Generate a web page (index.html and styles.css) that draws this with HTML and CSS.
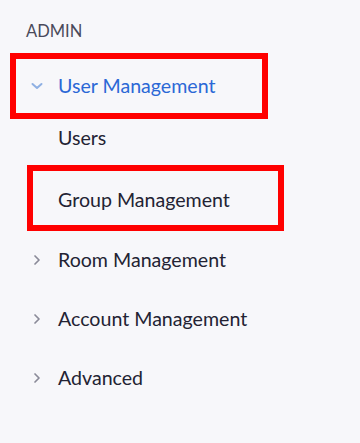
FILE: index.html
```html
<!DOCTYPE html>
<html lang="en">
<head>
    <meta charset="UTF-8">
    <meta name="viewport" content="width=device-width, initial-scale=1.0">
    <title>Admin Menu</title>
    <link rel="stylesheet" href="styles.css">
</head>
<body>

<nav class="sidebar">
    <div class="section-title">ADMIN</div>

    <div class="menu-item open">
        <svg class="chevron" viewBox="0 0 14 14" width="14" height="14"><path d="M2.5 5l4.5 4 4.5-4" fill="none" stroke="currentColor" stroke-width="2" stroke-linecap="round" stroke-linejoin="round"/></svg>
        <span>User Management</span>
        <div class="highlight highlight-main"></div>
    </div>
    <div class="sub-item first">Users</div>
    <div class="sub-item">
        <span>Group Management</span>
        <div class="highlight highlight-sub"></div>
    </div>

    <div class="menu-item">
        <svg class="chevron" viewBox="0 0 14 14" width="14" height="14"><path d="M5 3l4 4-4 4" fill="none" stroke="currentColor" stroke-width="1.7" stroke-linecap="round" stroke-linejoin="round"/></svg>
        <span>Room Management</span>
    </div>
    <div class="menu-item">
        <svg class="chevron" viewBox="0 0 14 14" width="14" height="14"><path d="M5 3l4 4-4 4" fill="none" stroke="currentColor" stroke-width="1.7" stroke-linecap="round" stroke-linejoin="round"/></svg>
        <span>Account Management</span>
    </div>
    <div class="menu-item">
        <svg class="chevron" viewBox="0 0 14 14" width="14" height="14"><path d="M5 3l4 4-4 4" fill="none" stroke="currentColor" stroke-width="1.7" stroke-linecap="round" stroke-linejoin="round"/></svg>
        <span>Advanced</span>
    </div>
</nav>

</body>
</html>
```

FILE: styles.css
```css
body {
    margin: 0;
    padding: 0;
    background-color: #f7f7fa;
    font-family: Lato, "Open Sans", sans-serif;
    color: #232333;
}
.sidebar {
    padding: 18px 0 0 0;
}
.section-title {
    height: 26px;
    padding-left: 26px;
    font-size: 16.5px;
    line-height: 26px;
    color: #4a4a5a;
    margin-bottom: 12px;
}
.menu-item {
    position: relative;
    display: flex;
    align-items: center;
    height: 59px;
    padding-left: 30px;
    font-size: 19.6px;
}
.menu-item .chevron {
    color: #8a8a98;
    margin-right: 14px;
}
.menu-item.open {
    color: #2b68d6;
}
.menu-item.open .chevron {
    color: #8fb0e3;
}
.sub-item {
    position: relative;
    display: flex;
    align-items: center;
    height: 62px;
    padding-left: 58px;
    font-size: 19.6px;
}
.sub-item.first {
    height: 45px;
    padding-bottom: 8px;
}
/* red annotation boxes */
.highlight {
    position: absolute;
    top: -3px;
    height: 54px;
    border: 6px solid #ff0000;
}
.highlight-main {
    left: 10px;
    width: 246px;
}
.highlight-sub {
    left: 27px;
    width: 245px;
}
```
